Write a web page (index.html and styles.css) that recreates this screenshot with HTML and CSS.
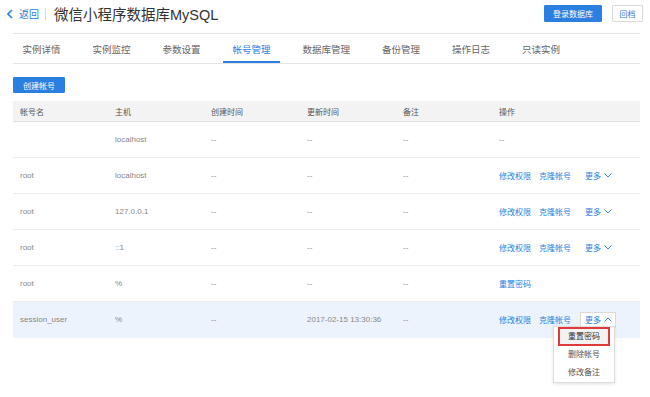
FILE: index.html
```html
<!DOCTYPE html>
<html lang="zh-CN">
<head>
    <meta charset="UTF-8">
    <meta name="viewport" content="width=device-width, initial-scale=1.0">
    <title>微信小程序数据库MySQL</title>
    <link rel="stylesheet" href="styles.css">
</head>
<body>
    <div class="topbar">
        <a class="back" href="#">
            <svg class="back-icon" width="6" height="10" viewBox="0 0 6 10"><polyline points="5,1 1,5 5,9" fill="none" stroke="currentColor" stroke-width="1.6"/></svg>
            返回
        </a>
        <span class="sep"></span>
        <h1 class="title">微信小程序数据库MySQL</h1>
        <div class="top-actions">
            <button class="btn btn-primary btn-login">登录数据库</button>
            <button class="btn btn-plain">回档</button>
        </div>
    </div>

    <div class="content">
        <nav class="tabs">
            <a class="tab" href="#">实例详情</a>
            <a class="tab" href="#">实例监控</a>
            <a class="tab" href="#">参数设置</a>
            <a class="tab active" href="#">帐号管理</a>
            <a class="tab" href="#">数据库管理</a>
            <a class="tab" href="#">备份管理</a>
            <a class="tab" href="#">操作日志</a>
            <a class="tab" href="#">只读实例</a>
        </nav>

        <div class="toolbar">
            <button class="btn btn-primary btn-create">创建帐号</button>
        </div>

        <div class="table-wrap">
            <table class="accounts">
                <thead>
                    <tr>
                        <th class="c-name">帐号名</th>
                        <th class="c-host">主机</th>
                        <th class="c-time">创建时间</th>
                        <th class="c-time">更新时间</th>
                        <th class="c-note">备注</th>
                        <th>操作</th>
                    </tr>
                </thead>
                <tbody>
                    <tr>
                        <td></td>
                        <td>localhost</td>
                        <td>--</td>
                        <td>--</td>
                        <td>--</td>
                        <td>--</td>
                    </tr>
                    <tr>
                        <td>root</td>
                        <td>localhost</td>
                        <td>--</td>
                        <td>--</td>
                        <td>--</td>
                        <td>
                            <div class="ops">
                                <a href="#">修改权限</a>
                                <a href="#">克隆帐号</a>
                                <span class="more">更多 <svg width="8" height="5" viewBox="0 0 8 5"><polyline points="0.5,0.5 4,4 7.5,0.5" fill="none" stroke="currentColor" stroke-width="0.9"/></svg></span>
                            </div>
                        </td>
                    </tr>
                    <tr>
                        <td>root</td>
                        <td>127.0.0.1</td>
                        <td>--</td>
                        <td>--</td>
                        <td>--</td>
                        <td>
                            <div class="ops">
                                <a href="#">修改权限</a>
                                <a href="#">克隆帐号</a>
                                <span class="more">更多 <svg width="8" height="5" viewBox="0 0 8 5"><polyline points="0.5,0.5 4,4 7.5,0.5" fill="none" stroke="currentColor" stroke-width="0.9"/></svg></span>
                            </div>
                        </td>
                    </tr>
                    <tr>
                        <td>root</td>
                        <td>::1</td>
                        <td>--</td>
                        <td>--</td>
                        <td>--</td>
                        <td>
                            <div class="ops">
                                <a href="#">修改权限</a>
                                <a href="#">克隆帐号</a>
                                <span class="more">更多 <svg width="8" height="5" viewBox="0 0 8 5"><polyline points="0.5,0.5 4,4 7.5,0.5" fill="none" stroke="currentColor" stroke-width="0.9"/></svg></span>
                            </div>
                        </td>
                    </tr>
                    <tr>
                        <td>root</td>
                        <td>%</td>
                        <td>--</td>
                        <td>--</td>
                        <td>--</td>
                        <td>
                            <div class="ops">
                                <a href="#">重置密码</a>
                            </div>
                        </td>
                    </tr>
                    <tr class="selected">
                        <td>session_user</td>
                        <td>%</td>
                        <td>--</td>
                        <td>2017-02-15 13:30:36</td>
                        <td>--</td>
                        <td>
                            <div class="ops">
                                <a href="#">修改权限</a>
                                <a href="#">克隆帐号</a>
                                <span class="more open">更多 <svg width="8" height="5" viewBox="0 0 8 5"><polyline points="0.5,4.5 4,1 7.5,4.5" fill="none" stroke="currentColor" stroke-width="0.9"/></svg></span>
                            </div>
                        </td>
                    </tr>
                </tbody>
            </table>

            <!-- dropdown opened from the last row's 更多 -->
            <ul class="menu">
                <li class="marked">重置密码</li>
                <li>删除帐号</li>
                <li>修改备注</li>
            </ul>
        </div>
    </div>
</body>
</html>
```

FILE: styles.css
```css
html,
body {
    min-height: 100vh;
}

body {
    margin: 0;
    font-family: "Liberation Sans", "Noto Sans CJK SC", sans-serif;
    background: #fff;
    color: #333;
}

a {
    text-decoration: none;
}

.topbar {
    display: flex;
    align-items: center;
    height: 27px;
    padding: 0 7px 0 7px;
}

.back {
    display: flex;
    align-items: center;
    color: #2a7fe0;
    font-size: 10px;
}

.back-icon {
    margin-right: 6px;
}

.sep {
    width: 1px;
    height: 12px;
    background: #d8d8d8;
    margin: 0 8px 0 6px;
}

.title {
    margin: 0;
    font-size: 14.5px;
    font-weight: normal;
    color: #333;
}

.top-actions {
    margin-left: auto;
    display: flex;
    gap: 10px;
}

.btn {
    font-family: inherit;
    font-size: 8px;
    height: 17px;
    padding: 0;
    border-radius: 1px;
    cursor: pointer;
}

.btn-primary {
    background: #2a7fe0;
    border: 1px solid #2a7fe0;
    color: #fff;
}

.btn-plain {
    width: 31px;
    background: #fff;
    border: 1px solid #d9d9d9;
    color: #2a7fe0;
}

.btn-login {
    width: 58px;
}

.content {
    margin: 6px 10px 0 13px;
    padding-bottom: 60px;
}

.tabs {
    display: flex;
    gap: 13px;
    border-top: 1px solid #e5e5e5;
    border-bottom: 1px solid #e5e5e5;
}

.tab {
    box-sizing: border-box;
    height: 29px;
    padding: 3px 9.5px 0;
    display: flex;
    align-items: center;
    font-size: 9.5px;
    color: #666;
    border-bottom: 2px solid transparent;
}

.tab.active {
    color: #2a7fe0;
    border-bottom-color: #2a7fe0;
}

.toolbar {
    display: flex;
    margin-top: 13px;
    margin-bottom: 8px;
}

.btn-create {
    width: 52px;
    height: 16px;
}

.table-wrap {
    position: relative;
}

.accounts {
    width: 627px;
    border-collapse: collapse;
    font-size: 8px;
    table-layout: fixed;
}

.accounts th {
    height: 20px;
    padding: 0 0 0 7px;
    text-align: left;
    font-weight: normal;
    color: #555;
    background: #f3f3f3;
    border-bottom: 1px solid #e2e2e2;
}

.c-name {
    width: 88px;
}

.c-host,
.c-time,
.c-note {
    width: 89px;
}

.accounts td {
    height: 35px;
    padding: 0 0 0 7px;
    color: #888;
    border-bottom: 1px solid #ececec;
}

.accounts tr.selected td {
    background: #ecf3fc;
    border-bottom-color: #ecf3fc;
}

.ops {
    display: flex;
    align-items: center;
}

.ops a {
    color: #2a7fe0;
    margin-right: 8px;
}

.more {
    display: inline-flex;
    align-items: center;
    gap: 3px;
    height: 14px;
    margin-left: 1px;
    padding: 0 3px 0 4px;
    color: #2a7fe0;
    border: 1px solid transparent;
}

.more.open {
    background: #fff;
    border-color: #d9d9d9;
}

.menu {
    position: absolute;
    top: 225px;
    left: 540px;
    width: 60px;
    margin: 0;
    padding: 0;
    list-style: none;
    background: #fff;
    border: 1px solid #dedede;
    box-shadow: 0 1px 3px rgba(0, 0, 0, 0.12);
    z-index: 2;
}

.menu li {
    height: 18px;
    line-height: 18px;
    text-align: center;
    color: #555;
    font-size: 8px;
}

.menu li.marked {
    box-sizing: border-box;
    height: 19px;
    line-height: 15px;
    margin: 0 4px;
    color: #333;
    background: #f2f2f2;
    border: 2px solid #e03a3a;
}
```
